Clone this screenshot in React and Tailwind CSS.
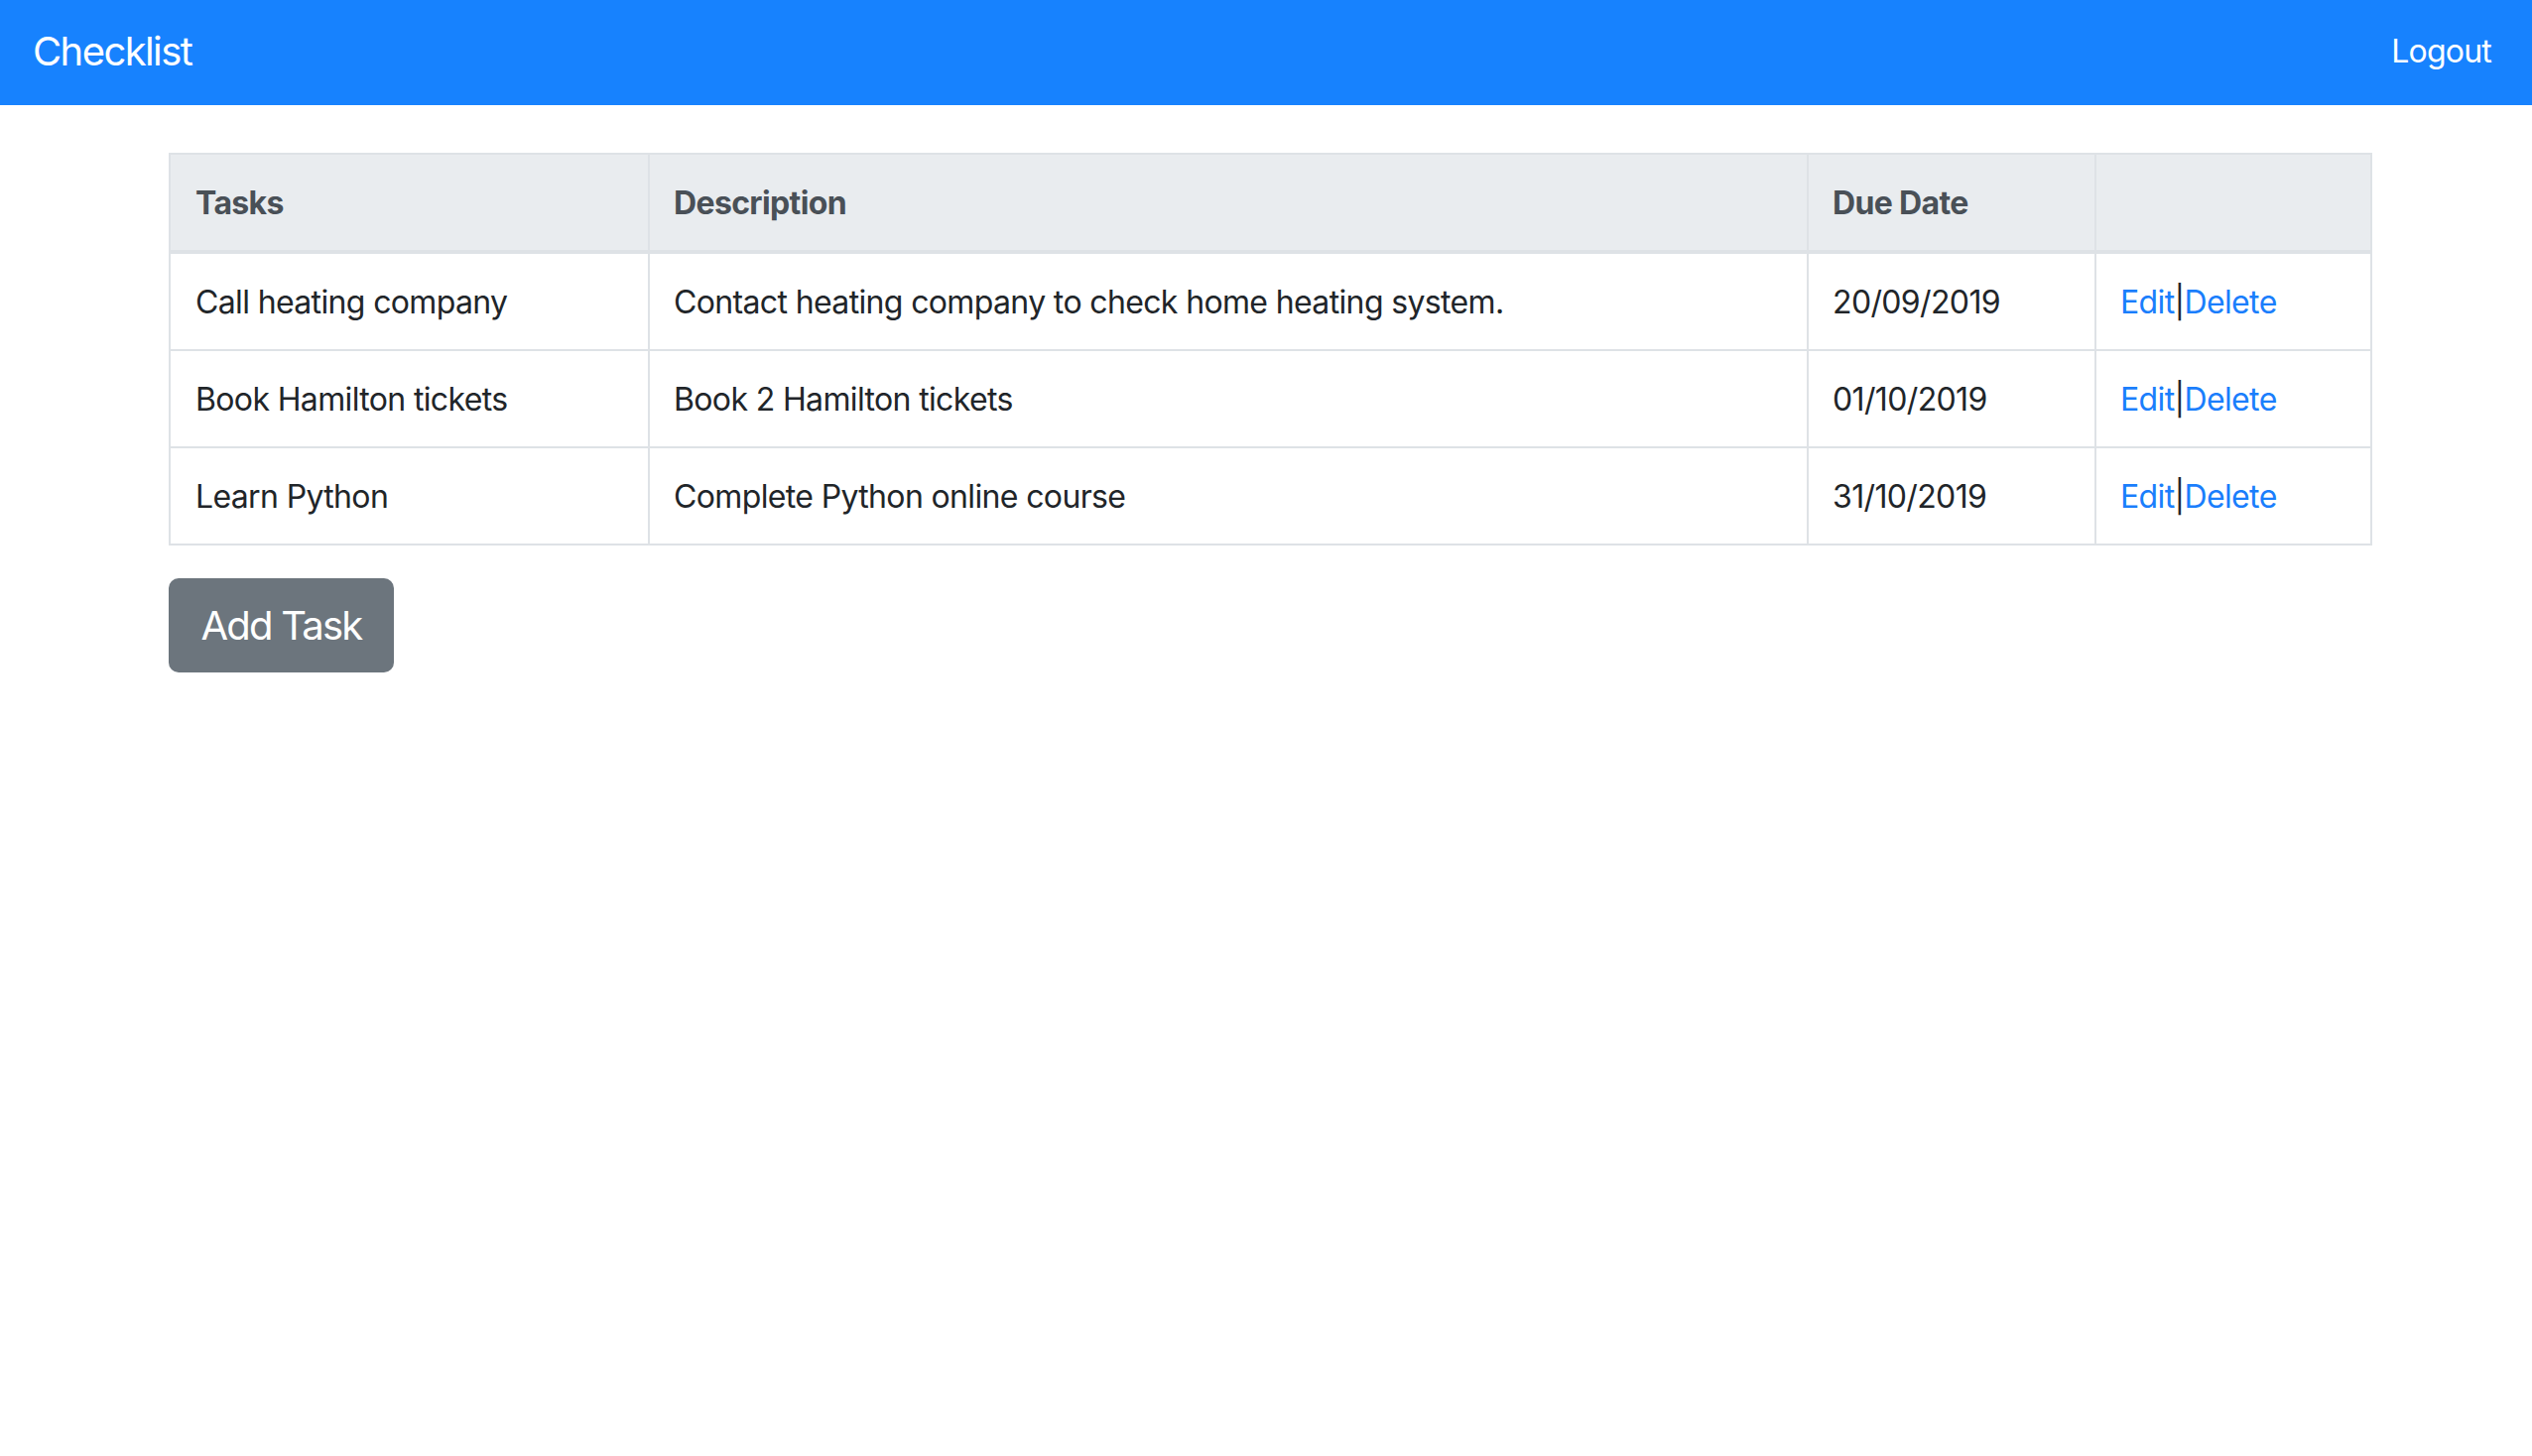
import React from "react";

const rows = [
  ["Call heating company", "Contact heating company to check home heating system.", "20/09/2019"],
  ["Book Hamilton tickets", "Book 2 Hamilton tickets", "01/10/2019"],
  ["Learn Python", "Complete Python online course", "31/10/2019"],
];

export default function App() {
  return (
    <div className="min-h-[1468px] bg-white" style={{ fontFamily: "Inter, 'Liberation Sans', sans-serif" }}>
      <nav className="h-[106px] bg-[#1782fe] flex items-center justify-between pl-[33px] pr-[41px]">
        <span className="text-[40px] leading-[60px] text-white tracking-[-0.04em] -mt-[2px]">Checklist</span>
        <span className="text-[32px] leading-[48px] text-white tracking-[-0.025em] -mt-[2px]">Logout</span>
      </nav>
      <div className="pl-[170px] pt-[48px]">
        <table className="w-[2219px] table-fixed border-collapse border-2 border-[#dee2e6] text-[32px] leading-[48px] text-[#212529] tracking-[-0.02em]">
          <colgroup>
            <col className="w-[483px]" />
            <col className="w-[1168px]" />
            <col className="w-[290px]" />
            <col className="w-[278px]" />
          </colgroup>
          <thead>
            <tr className="bg-[#e9ecef] text-[#495057]">
              <th className="text-left font-bold border-2 border-b-4 border-[#dee2e6] pl-[25px] pr-[24px] pt-[25px] pb-[23px]">Tasks</th>
              <th className="text-left font-bold border-2 border-b-4 border-[#dee2e6] pl-[24px] pr-[24px] pt-[25px] pb-[23px]">Description</th>
              <th className="text-left font-bold border-2 border-b-4 border-[#dee2e6] pl-[24px] pr-[24px] pt-[25px] pb-[23px]">Due Date</th>
              <th className="text-left font-bold border-2 border-b-4 border-[#dee2e6] pl-[24px] pr-[24px] pt-[25px] pb-[23px]"></th>
            </tr>
          </thead>
          <tbody>
            {rows.map((r) => (
              <tr key={r[0]}>
                <td className="border-2 border-[#dee2e6] pl-[25px] pr-[24px] pt-[25px] pb-[23px]">{r[0]}</td>
                <td className="border-2 border-[#dee2e6] pl-[24px] pr-[24px] pt-[25px] pb-[23px]">{r[1]}</td>
                <td className="border-2 border-[#dee2e6] pl-[24px] pr-[24px] pt-[25px] pb-[23px]">{r[2]}</td>
                <td className="border-2 border-[#dee2e6] pl-[24px] pr-[24px] pt-[25px] pb-[23px]">
                  <a href="#" className="text-[#1a7efc]">Edit</a>|<a href="#" className="text-[#1a7efc]">Delete</a>
                </td>
              </tr>
            ))}
          </tbody>
        </table>
        <button className="mt-[33px] h-[95px] w-[227px] rounded-[10px] bg-[#6c757d] text-white text-[40px] leading-[60px] tracking-[-0.045em]">
          Add Task
        </button>
      </div>
    </div>
  );
}
